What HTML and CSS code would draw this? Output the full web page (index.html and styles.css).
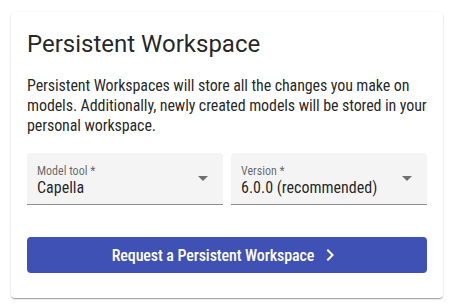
FILE: index.html
```html
<!DOCTYPE html>
<html lang="en">
<head>
<meta charset="utf-8">
<title>Persistent Workspace</title>
<link rel="stylesheet" href="styles.css">
</head>
<body>
<div class="card">
  <h2 class="card-title">Persistent Workspace</h2>
  <p class="card-text">Persistent Workspaces will store all the changes you make on models. Additionally, newly created models will be stored in your personal workspace.</p>
  <div class="fields">
    <div class="field">
      <div class="field-inner">
        <span class="field-label">Model tool *</span>
        <span class="field-value">Capella</span>
      </div>
      <span class="arrow"></span>
    </div>
    <div class="field">
      <div class="field-inner">
        <span class="field-label">Version *</span>
        <span class="field-value">6.0.0 (recommended)</span>
      </div>
      <span class="arrow"></span>
    </div>
  </div>
  <button class="btn" type="button">
    <span>Request a Persistent Workspace</span>
    <svg class="chev" width="24" height="24" viewBox="0 0 24 24"><path d="M10 6 8.59 7.41 13.17 12l-4.58 4.59L10 18l6-6z" fill="#fff"/></svg>
  </button>
</div>
</body>
</html>
```
FILE: styles.css
```css
* { box-sizing: border-box; }
html, body { margin: 0; padding: 0; background: #fff; }
body {
  padding: 12px 11px 8px 11px;
  font-family: Roboto, "Noto Sans", sans-serif;
  color: rgba(0,0,0,.87);
}
.card {
  width: 432px;
  border-radius: 4px;
  background: #fff;
  padding: 16px 16px 25px 16px;
  box-shadow: 0 2px 1px -1px rgba(0,0,0,.2), 0 1px 1px 0 rgba(0,0,0,.14), 0 1px 3px 0 rgba(0,0,0,.12);
}
.card-title {
  margin: 0 0 16px 0;
  font-size: 24px;
  line-height: 32px;
  font-weight: 400;
}
.card-text {
  margin: 0 0 17px 0;
  font-size: 16px;
  line-height: 20px;
  font-stretch: 85%;
  letter-spacing: -0.1px;
}
.fields {
  display: grid;
  grid-template-columns: 1fr 1fr;
  gap: 8px;
}
.field {
  height: 52px;
  background: #f4f4f4;
  border-radius: 4px 4px 0 0;
  border-bottom: 1px solid rgba(0,0,0,.42);
  display: flex;
  align-items: flex-start;
  padding: 11px 10px 0 10px;
  font-stretch: 85%;
}
.field-inner {
  flex: 1;
  display: flex;
  flex-direction: column;
}
.field-label {
  font-size: 12px;
  line-height: 14px;
  color: rgba(0,0,0,.6);
}
.field-value {
  font-size: 16px;
  line-height: 20px;
}
.arrow {
  width: 0;
  height: 0;
  border-left: 5px solid transparent;
  border-right: 5px solid transparent;
  border-top: 5px solid rgba(0,0,0,.54);
  margin: 12px 5px 0 0;
}
.btn {
  margin-top: 32px;
  width: 100%;
  height: 36px;
  border: 0;
  border-radius: 4px;
  background: #3f51b5;
  color: #fff;
  font-family: Roboto, "Noto Sans", sans-serif;
  font-size: 16px;
  font-weight: 500;
  font-stretch: 85%;
  letter-spacing: -0.1px;
  display: flex;
  align-items: center;
  justify-content: center;
  gap: 4px;
  padding: 0;
}
.chev { display: block; }
```
